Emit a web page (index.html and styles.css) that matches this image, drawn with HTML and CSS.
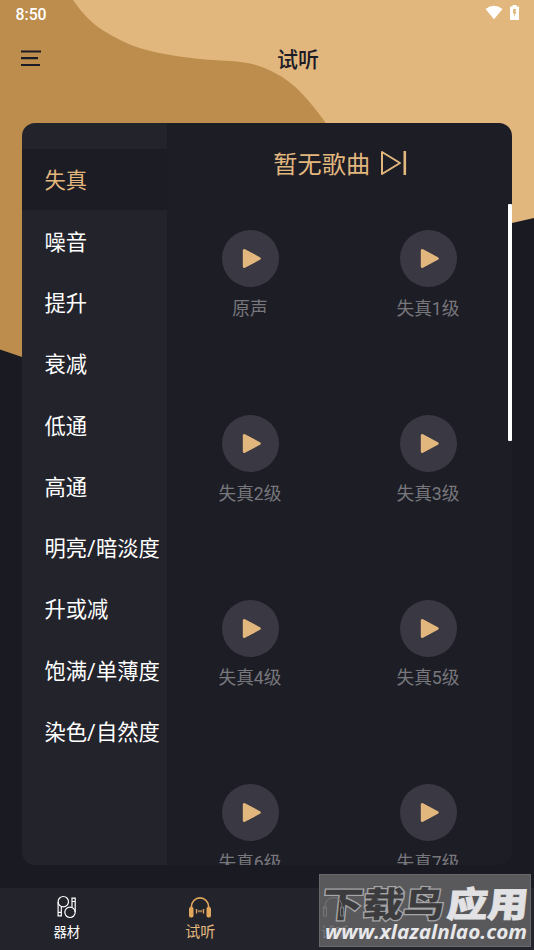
FILE: index.html
```html
<!DOCTYPE html>
<html lang="zh-CN">
<head>
<meta charset="utf-8">
<title>试听</title>
<link rel="stylesheet" href="styles.css">
</head>
<body>
<div class="app">
  <svg class="backdrop" viewBox="0 0 534 380" aria-hidden="true">
    <path fill="#bc8d4c" d="M0 0H400V260L180 390Q80 377 22 357L0 349.500Z"/>
    <path fill="#e2b77e" d="M73 0C83 14 91 23 104 31C125 44 142 50 165 54C187 58 207 60 230 61C249 62 263 66 275 73C295 83 310 101 325 122L400 240L512 223L534 218V0Z"/>
  </svg>
  <header class="status">
    <span>8:50</span>
    <div class="status-icons">
      <svg width="18" height="15" viewBox="0 0 18 15"><path fill="#fff" d="M.5 4Q9-2.500 17.500 4L9 14.300Z"/></svg>
      <svg width="9" height="15" viewBox="0 0 9 15"><path fill="#fff" d="M0 1.500H2.500V0H6.500V1.500H9V15H0Z"/><path fill="#e2b77e" d="M3 4H6L5.500 7H6.500L4 12L4.300 8.500H3Z"/></svg>
    </div>
  </header>
  <div class="titlebar">
    <svg class="menu" width="21" height="17" viewBox="0 0 21 17"><path stroke="#1c1c27" stroke-width="2.200" d="M0 1.500H20M0 8.200H17M0 15H19"/></svg>
    <h1>试听</h1>
  </div>
  <main class="card">
    <nav class="side">
      <a class="active"><span>失真</span></a><a><span>噪音</span></a><a><span>提升</span></a><a><span>衰减</span></a><a><span>低通</span></a><a><span>高通</span></a><a><span>明亮/暗淡度</span></a><a><span>升或减</span></a><a><span>饱满/单薄度</span></a><a><span>染色/自然度</span></a>
    </nav>
    <section class="content">
      <div class="song"><span>暂无歌曲</span>
        <svg width="27" height="26" viewBox="0 0 27 26"><path fill="none" stroke="#e2b77e" stroke-width="2" stroke-linejoin="round" d="M2 2V24L20 13Z"/><path fill="none" stroke="#e2b77e" stroke-width="2.600" d="M24.800 1V25"/></svg>
      </div>
      <div class="grid">
        <div class="tile"><i class="play"><svg viewBox="0 0 57 57"><use href="#tri"/></svg></i><span>原声</span></div>
        <div class="tile"><i class="play"><svg viewBox="0 0 57 57"><use href="#tri"/></svg></i><span>失真1级</span></div>
        <div class="tile"><i class="play"><svg viewBox="0 0 57 57"><use href="#tri"/></svg></i><span>失真2级</span></div>
        <div class="tile"><i class="play"><svg viewBox="0 0 57 57"><use href="#tri"/></svg></i><span>失真3级</span></div>
        <div class="tile"><i class="play"><svg viewBox="0 0 57 57"><use href="#tri"/></svg></i><span>失真4级</span></div>
        <div class="tile"><i class="play"><svg viewBox="0 0 57 57"><use href="#tri"/></svg></i><span>失真5级</span></div>
        <div class="tile"><i class="play"><svg viewBox="0 0 57 57"><use href="#tri"/></svg></i><span>失真6级</span></div>
        <div class="tile"><i class="play"><svg viewBox="0 0 57 57"><use href="#tri"/></svg></i><span>失真7级</span></div>
      </div>
    </section>
    <div class="scrollbar"></div>
  </main>
  <footer class="tabs">
    <a><svg width="24" height="24" viewBox="0 0 24 24" fill="none" stroke="#fff" stroke-width="1.200"><path d="M3.100 7V20.800H6.300V11.500M3.100 17.300H6.300"/><circle cx="8.300" cy="6.700" r="5.200"/><path d="M20.200 17V3.200H17V12.300M17 6.500H20.200"/><circle cx="15" cy="17.300" r="5.200"/></svg><span>器材</span></a>
    <a class="active"><svg width="24" height="24" viewBox="0 0 24 24"><path fill="none" stroke="#e2a75d" stroke-width="1.700" d="M3.400 14V11.800a8.600 8.900 0 0 1 17.200 0V14"/><rect x="1" y="12" width="4.500" height="10.500" rx="1.800" fill="#e2a75d"/><rect x="18.500" y="12" width="4.500" height="10.500" rx="1.800" fill="#e2a75d"/><path stroke="#e2a75d" stroke-width="1.300" d="M8.500 14V18.500M12 15.300V17.300M15.500 14V18.500"/><path stroke="#e2a75d" stroke-width=".8" d="M10.300 15V17.200M13.700 15V17.200"/></svg><span>试听</span></a>
    <a></a><a></a>
  </footer>
  <div class="watermark">
    <svg width="212" height="73" viewBox="0 0 212 73">
      <text class="wm-ghost" x="2" y="63">试听</text>
      <g transform="translate(0 43) skewX(-6)">
        <text class="wm-dark" transform="scale(1.160 1)" x="2" y="0">下载鸟</text>
        <text class="wm-light" transform="scale(1.160 1)" x="109.500" y="0">应用</text>
      </g>
      <path fill="none" stroke="#77777a" stroke-width="1" d="M6 35V32a8.500 8.500 0 0 1 17 0V35M4.500 33h3v9h-3ZM21.500 33h3v9h-3Z"/>
      <text class="wm-url" x="6" y="65" textLength="202" lengthAdjust="spacingAndGlyphs">www.xlazalnlao.com</text>
    </svg>
  </div>
</div>
<svg width="0" height="0" class="defs"><defs><path id="tri" fill="#e2b77e" stroke="#e2b77e" stroke-width="3" stroke-linejoin="round" d="M22.300 20.500V36.500L37.200 28.500Z"/></defs></svg>
</body>
</html>
```
FILE: styles.css
```css
* { box-sizing: border-box; }
body { margin: 0; background: #191a22; font-family: Roboto, "Noto Sans CJK SC", sans-serif; }
.app { position: relative; width: 534px; height: 950px; overflow: hidden; display: flex; flex-direction: column; }
.app > * { flex-shrink: 0; }
.backdrop { position: absolute; left: 0; top: 0; width: 534px; height: 380px; }
.defs { position: absolute; }
.status { position: relative; height: 28px; padding: 0 15px 0 15.500px; display: flex; align-items: center; justify-content: space-between; color: #fff; font-size: 15.800px; font-weight: 500; }
.status-icons { display: flex; gap: 7px; margin-top: -3px; }
.titlebar { position: relative; height: 94.500px; padding-left: 21px; display: flex; align-items: flex-start; }
.menu { margin-top: 22px; }
h1 { margin: 16px 0 0 235px; font-size: 21px; line-height: 32px; font-weight: 500; color: #1c1c27; }
.card { position: relative; margin-left: 22px; width: 490px; height: 742.500px; display: flex; border-radius: 13px; }
.side { width: 145px; padding-top: 26.700px; background: #23232c; border-radius: 13px 0 0 13px; }
.side a { display: flex; align-items: center; height: 61.300px; padding: 0 0 2px 22.500px; font-size: 21.300px; color: #fff; white-space: nowrap; }
.side .active { background: #1c1c25; color: #e2b77e; }
.content { width: 345px; background: #1d1d26; border-radius: 0 13px 13px 0; overflow: hidden; }
.song { height: 80px; display: flex; justify-content: center; align-items: center; gap: 9.500px; padding-left: 1px; font-size: 24.200px; color: #e2b77e; }
.grid { display: grid; grid-template-columns: 114px 114px; column-gap: 64px; grid-auto-rows: 184.700px; padding: 27.700px 0 0 26px; }
.tile { display: flex; flex-direction: column; align-items: center; font-size: 17.700px; line-height: 26px; color: #77777c; }
.play { width: 57px; height: 57px; border-radius: 50%; background: #3a3842; margin-bottom: 8.800px; }
.play svg { display: block; width: 57px; height: 57px; }
.scrollbar { position: absolute; right: 0; top: 81px; width: 4px; height: 237.500px; background: #fff; border-radius: 1px; }
.tabs { margin-top: 23px; height: 62px; background: #23232c; display: grid; grid-template-columns: repeat(4, 133.500px); }
.tabs a { display: flex; flex-direction: column; align-items: center; padding-top: 7px; font-size: 13.300px; line-height: 20px; color: #fff; }
.tabs a span { margin-top: 4px; }
.tabs .active { font-size: 15px; color: #e2b77e; }
.tabs .active span { margin-top: 3px; }
.watermark { position: absolute; left: 319px; top: 874px; width: 212px; height: 73px; background: #59595c; border: 1px solid #68686b; }
.watermark svg { display: block; margin: -1px; }
.watermark text { font-family: "Noto Sans CJK SC", sans-serif; font-weight: 900; font-size: 35px; }
.watermark .wm-dark { fill: #3c3c3f; stroke: #a5a5a7; stroke-width: 2.500px; paint-order: stroke; }
.watermark .wm-light { fill: #e2e2e4; stroke: #e2e2e4; stroke-width: .8px; }
.watermark .wm-url { font-family: "Open Sans", sans-serif; font-style: italic; font-weight: 700; font-size: 19px; fill: #e8e8ea; }
.watermark .wm-ghost { font-size: 14px; font-weight: 400; fill: #77777a; }
```
